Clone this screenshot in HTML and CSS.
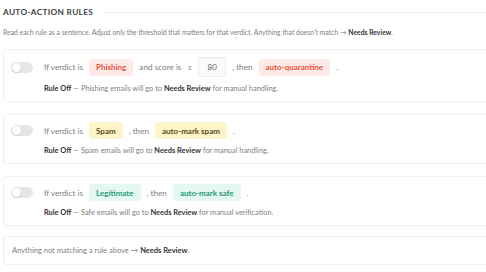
FILE: index.html
```html
<!DOCTYPE html>
<html lang="en">
<head>
    <meta charset="UTF-8">
    <meta name="viewport" content="width=device-width, initial-scale=1.0">
    <title>Auto-Action Rules</title>
    <link rel="stylesheet" href="styles.css">
</head>
<body>
    <div class="panel">
        <div class="section-head">
            <h2>AUTO-ACTION RULES</h2>
            <div class="head-line"></div>
        </div>
        <p class="intro">Read each rule as a sentence. Adjust only the threshold that matters for that verdict. Anything that doesn't match &rarr; <b>Needs Review</b>.</p>

        <div class="rule">
            <div class="rule-row">
                <span class="toggle"><span class="knob"></span></span>
                <span class="word">If verdict is</span>
                <span class="pill red">Phishing</span>
                <span class="word">and score is</span>
                <span class="word">&ge;</span>
                <input class="score" type="text" value="80">
                <span class="word">, then</span>
                <span class="pill red">auto-quarantine</span>
                <span class="word">.</span>
            </div>
            <div class="rule-note"><b>Rule Off</b> &mdash; Phishing emails will go to <b>Needs Review</b> for manual handling.</div>
        </div>

        <div class="rule">
            <div class="rule-row">
                <span class="toggle"><span class="knob"></span></span>
                <span class="word">If verdict is</span>
                <span class="pill yellow">Spam</span>
                <span class="word">, then</span>
                <span class="pill yellow">auto-mark spam</span>
                <span class="word">.</span>
            </div>
            <div class="rule-note"><b>Rule Off</b> &mdash; Spam emails will go to <b>Needs Review</b> for manual handling.</div>
        </div>

        <div class="rule">
            <div class="rule-row">
                <span class="toggle"><span class="knob"></span></span>
                <span class="word">If verdict is</span>
                <span class="pill green">Legitimate</span>
                <span class="word">, then</span>
                <span class="pill green">auto-mark safe</span>
                <span class="word">.</span>
            </div>
            <div class="rule-note"><b>Rule Off</b> &mdash; Safe emails will go to <b>Needs Review</b> for manual verification.</div>
        </div>

        <div class="rule fallback">
            Anything not matching a rule above &rarr; <b>Needs Review</b>.
        </div>
    </div>
</body>
</html>
```

FILE: styles.css
```css
* {
    margin: 0;
    padding: 0;
    box-sizing: border-box;
}

body {
    background: #ffffff;
    font-family: Lato, 'Noto Sans', sans-serif;
    color: #7a7a7a;
    overflow: hidden;
}

.panel {
    padding: 7px 0 0 3px;
}

b {
    color: #333333;
    font-weight: 700;
}

.section-head {
    display: flex;
    align-items: center;
    gap: 12px;
    height: 10px;
}

.section-head h2 {
    font-size: 8.3px;
    font-weight: 700;
    letter-spacing: 0.3px;
    color: #444444;
    white-space: nowrap;
}

.head-line {
    flex: 1;
    height: 1px;
    background: #ebebeb;
}

.intro {
    font-size: 6.8px;
    line-height: 10px;
    margin-top: 10px;
    color: #808080;
    white-space: nowrap;
}

.rule {
    border: 1px solid #efefef;
    border-right: 0;
    border-radius: 4px 0 0 4px;
    padding: 7px 0 7px 7px;
    margin-top: 12px;
}

.rule-row {
    display: flex;
    align-items: center;
    gap: 6px;
    font-size: 8.2px;
    white-space: nowrap;
}

.toggle {
    width: 22px;
    height: 11px;
    border-radius: 6px;
    background: #e6e6e6;
    display: flex;
    align-items: center;
    padding: 0 1px;
    margin-right: 5px;
}

.knob {
    width: 9px;
    height: 9px;
    border-radius: 50%;
    background: #ffffff;
    box-shadow: 0 0.5px 1.5px rgba(0, 0, 0, 0.2);
}

.word {
    color: #808080;
}

.pill {
    height: 17px;
    padding: 0 7px;
    border-radius: 3px;
    font-weight: 700;
    font-size: 8px;
    display: flex;
    align-items: center;
}

.pill.red {
    background: #fde9e5;
    color: #ea5443;
}

.pill.yellow {
    background: #fdf4c9;
    color: #5b4a1c;
}

.pill.green {
    background: #e4f7f0;
    color: #1f9c72;
}

.score {
    width: 28px;
    height: 20px;
    border: 1px solid #ececec;
    border-radius: 3px;
    background: #fafafa;
    font-family: inherit;
    font-size: 8px;
    color: #666666;
    text-align: center;
    outline: none;
}

.rule-note {
    font-size: 7.4px;
    line-height: 10px;
    margin-top: 7px;
    padding-left: 33px;
    white-space: nowrap;
    color: #808080;
}

.fallback {
    font-size: 7.5px;
    line-height: 11px;
    padding: 8px 0 8px 8px;
    margin-top: 10px;
    color: #808080;
}
```
